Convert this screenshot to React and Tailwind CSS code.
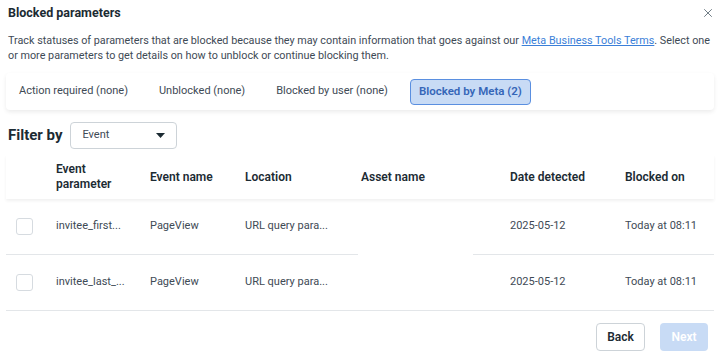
import { X } from "lucide-react";

const tabs = [
  { label: "Action required (none)" },
  { label: "Unblocked (none)" },
  { label: "Blocked by user (none)" },
  { label: "Blocked by Meta (2)", active: true },
];

const rows = [
  { param: "invitee_first...", event: "PageView", location: "URL query para...", date: "2025-05-12", blocked: "Today at 08:11" },
  { param: "invitee_last_...", event: "PageView", location: "URL query para...", date: "2025-05-12", blocked: "Today at 08:11" },
];

function Row({ row }) {
  return (
    <div className="flex h-[55px] items-center text-[11px] text-[#3e4a55]">
      <div className="w-[50px] pl-[10px]">
        <div className="h-[17px] w-[17px] rounded-[3px] border border-[#d6dbe0] bg-white" />
      </div>
      <div className="w-[94px]">{row.param}</div>
      <div className="w-[95px]">{row.event}</div>
      <div className="w-[116px]">{row.location}</div>
      <div className="w-[149px]" />
      <div className="w-[115px]">{row.date}</div>
      <div className="flex-1">{row.blocked}</div>
    </div>
  );
}

export default function App() {
  return (
    <div className="h-[363px] w-[720px] overflow-hidden bg-white font-['Roboto',sans-serif] text-[#1c2b33]">
      <div className="flex h-[26px] items-center justify-between pl-[8px] pr-[5px]">
        <h1 className="text-[12.5px] font-bold leading-[16px]">Blocked parameters</h1>
        <X className="h-[14px] w-[14px] text-[#5d6b75]" strokeWidth={1.5} />
      </div>

      <p className="mt-[7px] pl-[8px] pr-0 text-[10.8px] leading-[15px] text-[#3e4a55]">
        Track statuses of parameters that are blocked because they may contain information that goes against our{" "}
        <span className="text-[#3b7fd8] underline">Meta Business Tools Terms</span>. Select one or more parameters to get
        details on how to unblock or continue blocking them.
      </p>

      <div className="mx-[6px] mt-[10px] flex h-[37px] items-center gap-[13px] rounded-[4px] bg-white px-[4px] shadow-[0_2px_4px_rgba(0,0,0,0.08)]">
        {tabs.map((t) =>
          t.active ? (
            <div
              key={t.label}
              className="flex h-[26px] items-center rounded-[4px] border border-[#5a8fe0] bg-[#c8dbf5] px-[8px] text-[11.5px] font-semibold text-[#3566b8]"
            >
              {t.label}
            </div>
          ) : (
            <div key={t.label} className="flex h-[26px] items-center px-[9px] text-[11px] text-[#3e4a55]">
              {t.label}
            </div>
          )
        )}
      </div>

      <div className="mt-[12px] flex items-center gap-[8px] pl-[8px]">
        <span className="text-[15px] font-bold">Filter by</span>
        <div className="flex h-[27px] w-[107px] items-center justify-between rounded-[4px] border border-[#cdd3d8] pl-[11px] pr-[11px] text-[11px] text-[#3e4a55]">
          <span>Event</span>
          <svg width="9" height="5" viewBox="0 0 9 5">
            <path d="M0 0h9L4.5 5z" fill="#1c2b33" />
          </svg>
        </div>
      </div>

      <div className="mx-[6px] mt-[6px]">
        <div className="flex h-[44px] items-center text-[12px] font-semibold leading-[15px] shadow-[0_2px_3px_rgba(0,0,0,0.06)]">
          <div className="w-[50px]" />
          <div className="w-[94px]">
            Event
            <br />
            parameter
          </div>
          <div className="w-[95px]">Event name</div>
          <div className="w-[116px]">Location</div>
          <div className="w-[149px]">Asset name</div>
          <div className="w-[115px]">Date detected</div>
          <div className="flex-1">Blocked on</div>
        </div>
        <Row row={rows[0]} />
        <div className="flex">
          <div className="h-px w-[352px] bg-[#e3e6e9]" />
          <div className="h-px w-[115px]" />
          <div className="h-px flex-1 bg-[#e3e6e9]" />
        </div>
        <Row row={rows[1]} />
        <div className="h-px bg-[#e3e6e9]" />
      </div>

      <div className="mt-[12px] flex justify-end gap-[15px] pr-[12px]">
        <button className="h-[28px] w-[49px] rounded-[4px] border border-[#cdd3d8] bg-white text-[12px] font-semibold text-[#1c2b33]">
          Back
        </button>
        <button className="h-[28px] w-[48px] rounded-[4px] bg-[#c8dbf5] text-[12px] font-semibold text-white">
          Next
        </button>
      </div>
    </div>
  );
}
